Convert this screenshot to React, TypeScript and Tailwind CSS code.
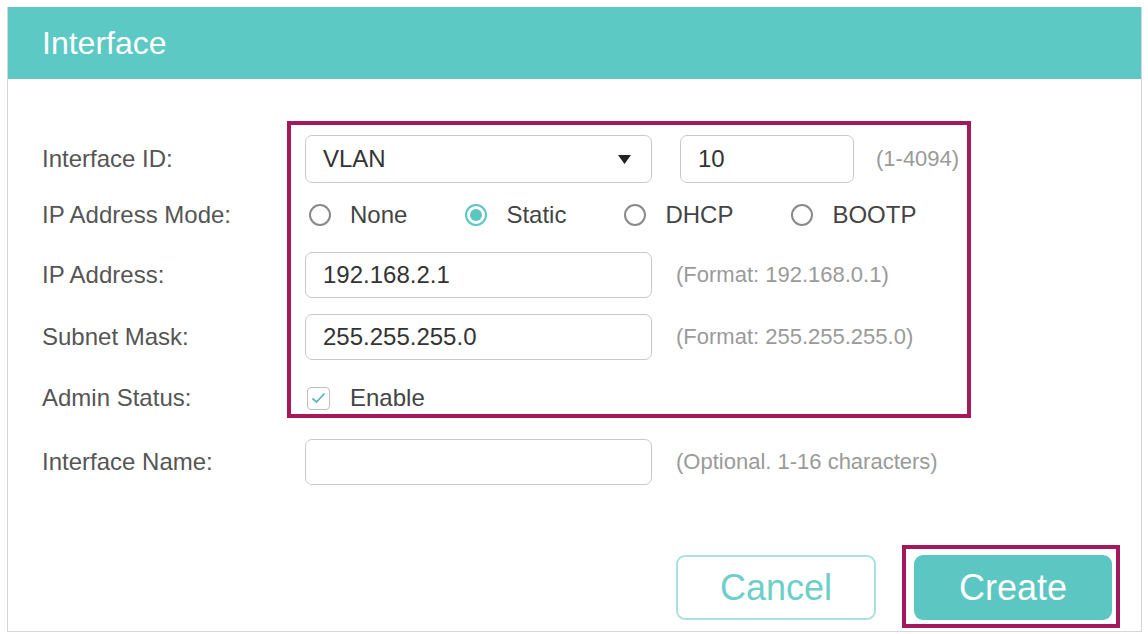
import React from "react";

const font = { fontFamily: '"Liberation Sans", Arial, sans-serif' };

function Radio({ label, checked }: { label: string; checked?: boolean }) {
  return (
    <div className="flex items-center">
      <span
        className={
          checked
            ? "flex h-[22px] w-[22px] items-center justify-center rounded-full border-2 border-[#5cc6c1]"
            : "flex h-[22px] w-[22px] items-center justify-center rounded-full border-2 border-[#8a8a8a]"
        }
      >
        {checked && <span className="h-[12px] w-[12px] rounded-full bg-[#5cc6c1]" />}
      </span>
      <span className="ml-[19px] text-[24px] leading-none text-[#444]">{label}</span>
    </div>
  );
}

function TextBox({ value, w = "w-[347px]" }: { value?: string; w?: string }) {
  return (
    <div
      className={`${w} flex h-[46px] items-center rounded-[7px] border border-[#c9c9c9] bg-white pl-[17px] text-[24px] text-[#333]`}
    >
      {value}
    </div>
  );
}

function Label({ children }: { children: React.ReactNode }) {
  return <div className="w-[263px] shrink-0 text-[24px] leading-none text-[#555]">{children}</div>;
}

function Hint({ children, ml = "ml-[24px]" }: { children: React.ReactNode; ml?: string }) {
  return <div className={`${ml} text-[22px] leading-none text-[#9a9a9a]`}>{children}</div>;
}

export default function App() {
  return (
    <div className="h-[634px] w-[1148px] bg-white pt-[7px]" style={font}>
      <div className="relative ml-[7px] h-[625px] w-[1135px] border border-t-0 border-[#d6d6d6]">
        <div className="flex h-[72px] items-center bg-[#5dc9c5] pl-[34px] text-[32px] text-white">
          Interface
        </div>

        <div className="pl-[34px]">
          {/* Row 1 */}
          <div className="mt-[56px] flex h-[48px] items-center">
            <Label>Interface ID:</Label>
            <div className="flex h-[48px] w-[347px] items-center justify-between rounded-[7px] border border-[#c9c9c9] pl-[17px] pr-[20px] text-[24px] text-[#333]">
              <span>VLAN</span>
              <svg width="13" height="9" viewBox="0 0 13 9">
                <path d="M0 0 H13 L6.5 9 Z" fill="#222" />
              </svg>
            </div>
            <div className="ml-[28px]">
              <div className="flex h-[48px] w-[174px] items-center rounded-[7px] border border-[#c9c9c9] pl-[17px] text-[24px] text-[#333]">
                10
              </div>
            </div>
            <Hint ml="ml-[22px]">(1-4094)</Hint>
          </div>

          {/* Row 2 */}
          <div className="mt-[12px] flex h-[40px] items-center">
            <Label>IP Address Mode:</Label>
            <div className="ml-[4px] flex items-center gap-[58px]">
              <Radio label="None" />
              <Radio label="Static" checked />
              <Radio label="DHCP" />
              <Radio label="BOOTP" />
            </div>
          </div>

          {/* Row 3 */}
          <div className="mt-[17px] flex h-[46px] items-center">
            <Label>IP Address:</Label>
            <TextBox value="192.168.2.1" />
            <Hint>(Format: 192.168.0.1)</Hint>
          </div>

          {/* Row 4 */}
          <div className="mt-[16px] flex h-[46px] items-center">
            <Label>Subnet Mask:</Label>
            <TextBox value="255.255.255.0" />
            <Hint>(Format: 255.255.255.0)</Hint>
          </div>

          {/* Row 5 */}
          <div className="mt-[18px] flex h-[40px] items-center">
            <Label>Admin Status:</Label>
            <div className="ml-[2px] flex items-center">
              <span className="flex h-[23px] w-[23px] items-center justify-center rounded-[4px] border border-[#bdbdbd]">
                <svg width="15" height="12" viewBox="0 0 15 12">
                  <path d="M1.5 6.5 L5.5 10 L13.5 1.5" fill="none" stroke="#5cb8b2" strokeWidth="1.8" />
                </svg>
              </span>
              <span className="ml-[20px] text-[24px] leading-none text-[#444]">Enable</span>
            </div>
          </div>

          {/* Row 6 */}
          <div className="mt-[20px] flex h-[47px] items-center">
            <Label>Interface Name:</Label>
            <TextBox />
            <Hint>(Optional. 1-16 characters)</Hint>
          </div>

          {/* Buttons */}
          <div className="mt-[70px] flex justify-end gap-[38px] pr-[29px]">
            <button className="h-[65px] w-[200px] rounded-[9px] border-2 border-[#a9e1dd] bg-white text-[36px] text-[#6ccfc8]">
              Cancel
            </button>
            <div className="relative">
              <button className="h-[65px] w-[198px] rounded-[9px] bg-[#5cc6c2] text-[36px] text-white">
                Create
              </button>
              <div className="pointer-events-none absolute -bottom-[8px] -left-[12px] -right-[8px] -top-[10px] border-4 border-[#a3195b]" />
            </div>
          </div>
        </div>

        {/* highlight box */}
        <div className="pointer-events-none absolute left-[279px] top-[114px] h-[297px] w-[684px] border-4 border-[#a3195b]" />
      </div>
    </div>
  );
}
